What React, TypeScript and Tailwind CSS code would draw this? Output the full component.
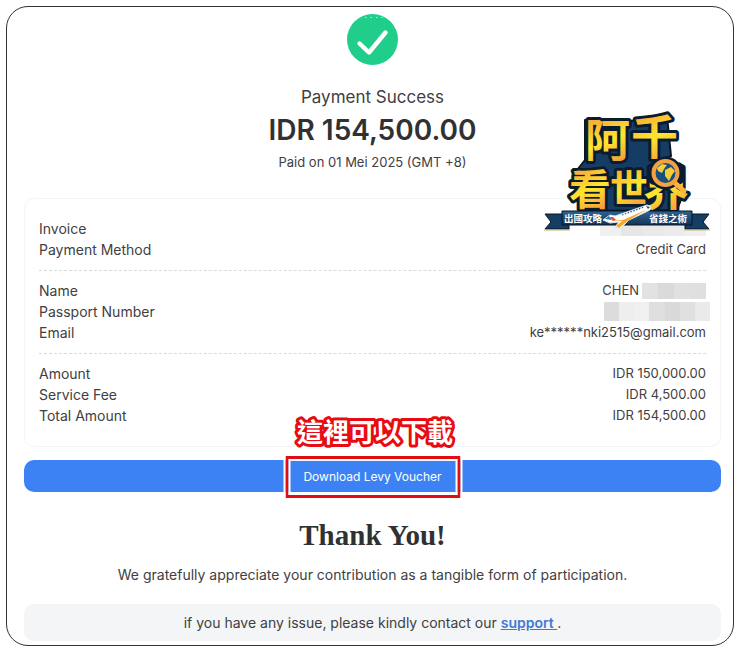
import { Fragment, type ReactNode } from 'react';

type Row = { label: string; value: ReactNode };

const Mosaic = ({ shades, className }: { shades: string[]; className: string }) => (
	<span className={`flex ${className}`} aria-hidden="true">
		{shades.map((shade, i) => (
			<span key={i} className={`flex-1 ${shade}`} />
		))}
	</span>
);

const groups: Row[][] = [
	[
		{
			label: 'Invoice',
			value: (
				<Mosaic
					className="w-[106px] h-[15px]"
					shades={['bg-[#f0f0f0]', 'bg-[#e6e6e6]', 'bg-[#e9e9e9]', 'bg-[#ececec]', 'bg-[#efefef]']}
				/>
			),
		},
		{ label: 'Payment Method', value: 'Credit Card' },
	],
	[
		{
			label: 'Name',
			value: (
				<>
					CHEN
					<Mosaic
						className="w-16 h-4 ml-[3px]"
						shades={['bg-[#e2e2e2]', 'bg-[#dadada]', 'bg-[#e0e0e0]', 'bg-[#dfdfdf]']}
					/>
				</>
			),
		},
		{
			label: 'Passport Number',
			value: (
				<Mosaic
					className="w-[106px] h-[19px] -mr-1"
					shades={[
						'bg-[#dcdcdc]',
						'bg-[#eeeeee]',
						'bg-[#f0f0f0]',
						'bg-[#dedede]',
						'bg-[#d9d9d9]',
						'bg-[#e0e0e0]',
						'bg-[#eaeaea]',
					]}
				/>
			),
		},
		{ label: 'Email', value: 'ke******nki2515@gmail.com' },
	],
	[
		{ label: 'Amount', value: 'IDR 150,000.00' },
		{ label: 'Service Fee', value: 'IDR 4,500.00' },
		{ label: 'Total Amount', value: 'IDR 154,500.00' },
	],
];

const logoChars = [
	{ char: '阿', x: 42, y: 49, size: 45 },
	{ char: '千', x: 88, y: 46, size: 47 },
	{ char: '看', x: 26, y: 97, size: 42 },
	{ char: '世', x: 67, y: 94, size: 38 },
	{ char: '界', x: 100, y: 97, size: 46 },
];

const SuccessIcon = () => (
	<svg className="w-[51px] h-[51px]" viewBox="0 0 51 51" aria-hidden="true">
		<circle cx="25.5" cy="25.5" r="25.5" fill="#20cd8a" />
		<path
			d="M12.5 29.5 L22 38.5 L38.5 18.5"
			fill="none"
			stroke="#fff"
			strokeWidth="4.4"
			strokeLinecap="round"
			strokeLinejoin="round"
		/>
		<path d="M18 3.5 H36" stroke="#b5f0d8" strokeWidth="1.2" strokeDasharray="1.5 4" />
	</svg>
);

const Logo = () => (
	<svg className="w-[168px] h-32 overflow-visible" viewBox="0 0 168 128" role="img" aria-label="阿千看世界">
		<defs>
			<linearGradient id="gold" x1="0" y1="0" x2="0.3" y2="1">
				<stop offset="0" stopColor="#f2944a" />
				<stop offset="0.35" stopColor="#fbb733" />
				<stop offset="0.65" stopColor="#ffe62e" />
				<stop offset="1" stopColor="#f6a03a" />
			</linearGradient>
			<linearGradient id="ribbon" x1="0" y1="0" x2="0" y2="1">
				<stop offset="0" stopColor="#2c6593" />
				<stop offset="1" stopColor="#123456" />
			</linearGradient>
		</defs>
		<path
			d="M42 12 L88 13 L124 8 L128 48 L113 54 L141 84 L134 102 L36 103 L34 62 L42 52 Z"
			fill="#153d64"
			stroke="#0b1622"
			strokeWidth="2"
			strokeLinejoin="round"
		/>
		{/* ribbon tails */}
		<path d="M2 106 H26 V121 H2 L8 114 Z M166 106 H142 V121 H166 L160 114 Z" fill="#143e63" stroke="#0b1622" />
		<path d="M1 122 H27 M141 122 H167" stroke="#c6b878" />
		<g
			fontFamily='"Noto Sans CJK TC", sans-serif'
			fontWeight="700"
			fill="url(#gold)"
			stroke="#0a1c30"
			strokeWidth="6"
			strokeLinejoin="round"
			paintOrder="stroke"
		>
			{logoChars.map((c) => (
				<text key={c.char} x={c.x} y={c.y} fontSize={c.size}>
					{c.char}
				</text>
			))}
		</g>
		{/* magnifier with globe */}
		<rect x="104" y="54" width="38" height="23" rx="8" fill="#0a1c30" />
		<circle cx="122.5" cy="65" r="16.5" fill="#0a1c30" />
		<path d="M132 75 L141 83" stroke="#fbb43c" strokeWidth="5" strokeLinecap="round" />
		<circle cx="122.5" cy="65" r="12" fill="#174f80" stroke="#f5a142" strokeWidth="4" />
		<path
			d="M114 60 L119 56 L124 57 L121 61 L119 65 L115 63 Z M122 62 L128 59 L132 63 L129 67 L126 73 L122 68 Z"
			fill="#f5ce32"
		/>
		<path d="M19 103 H149 V117 H19 Z" fill="url(#ribbon)" stroke="#0b1622" />
		<g fontFamily='"Noto Sans CJK TC", sans-serif' fontWeight="700" fontSize="9.5" fill="#fff">
			<text x="21" y="114">出國攻略</text>
			<text x="106" y="114">省錢之術</text>
		</g>
		{/* plane */}
		<path d="M60 112 L67 107 L72 108 L104 97 Q110 98 107 102 L86 112 L77 121 L72 119 L76 114 L67 115 Z" fill="#fff" stroke="#dce5ee" />
		<path d="M66 113 L80 112 L105 101 L86 112 L76 120 L73 118 L79 113 Z" fill="#f7a92d" />
		<path d="M62 111 L66 108 L69 112 Z" fill="#2b73ad" />
		<path d="M67 109 L70 109 L73 112 L70 113 Z" fill="#e84b36" />
		<path d="M79 107 L101 99" stroke="#315e82" strokeWidth="1.2" strokeDasharray="1.5 1.5" />
		<path d="M103 98 L107 99 L105 101 Z" fill="#285e35" />
	</svg>
);

export default function App() {
	return (
		<main className="relative m-1.5 rounded-[22px] border border-[#333] bg-white pt-[7px] pr-3 pb-1 pl-[17px] font-['Inter','Noto_Sans_CJK_TC',sans-serif] text-[14px] leading-[21px] text-[#3f4042]">
			<header className="flex flex-col items-center text-center">
				<SuccessIcon />
				<p className="mt-5 text-[17px] leading-6">Payment Success</p>
				<h1 className="text-[28px] leading-[42px] font-semibold text-[#303133]">IDR 154,500.00</h1>
				<p className="text-[13px] leading-[22px]">Paid on 01 Mei 2025 (GMT +8)</p>
			</header>

			<div className="absolute top-[101px] right-[22px]">
				<Logo />
			</div>

			<section className="mt-[25px] rounded-[10px] border border-[#f3f4f5] px-3.5 pt-[19px] pb-5">
				{groups.map((rows, i) => (
					<Fragment key={i}>
						{i > 0 && <hr className="mt-2.5 mb-[9px] border-dashed border-[#d9dadb]" />}
						<dl>
							{rows.map((row) => (
								<div key={row.label} className="flex h-[21px] items-center justify-between">
									<dt>{row.label}</dt>
									<dd className="flex items-center text-[13px]">{row.value}</dd>
								</div>
							))}
						</dl>
					</Fragment>
				))}
			</section>

			<div className="relative mt-[13px]">
				<button className="block h-8 w-full rounded-[10px] bg-[#3c82f5] text-[12px] text-white">
					Download Levy Voucher
				</button>
				{/* callout around the button label */}
				<div className="pointer-events-none absolute -top-1 left-1/2 h-[42px] w-[175px] -translate-x-1/2 border-3 border-[#e00d13] outline-2 outline-white">
					<div className="h-full border-2 border-white" />
				</div>
				<svg
					className="pointer-events-none absolute -top-[46px] left-1/2 h-10 w-[180px] -translate-x-1/2 overflow-visible"
					viewBox="0 0 180 40"
				>
					<text
						x="92"
						y="28"
						textAnchor="middle"
						fontFamily='"Noto Sans CJK TC", sans-serif'
						fontWeight="700"
						fontSize="26"
						fill="#fff"
						stroke="#e80c12"
						strokeWidth="6"
						strokeLinejoin="round"
						paintOrder="stroke"
					>
						這裡可以下載
					</text>
				</svg>
			</div>

			<section className="text-center">
				<h2 className="mt-[23px] font-['Liberation_Serif',serif] text-[29px] leading-10 font-bold text-[#303133]">
					Thank You!
				</h2>
				<p className="mt-[9px]">
					We gratefully appreciate your contribution as a tangible form of participation.
				</p>
			</section>

			<footer className="mt-[19px] rounded-[10px] bg-[#f3f5f7] py-2 text-center">
				if you have any issue, please kindly contact our{' '}
				<a href="#support" className="font-semibold text-[#3f79d6] underline">
					support&nbsp;
				</a>
				.
			</footer>
		</main>
	);
}
